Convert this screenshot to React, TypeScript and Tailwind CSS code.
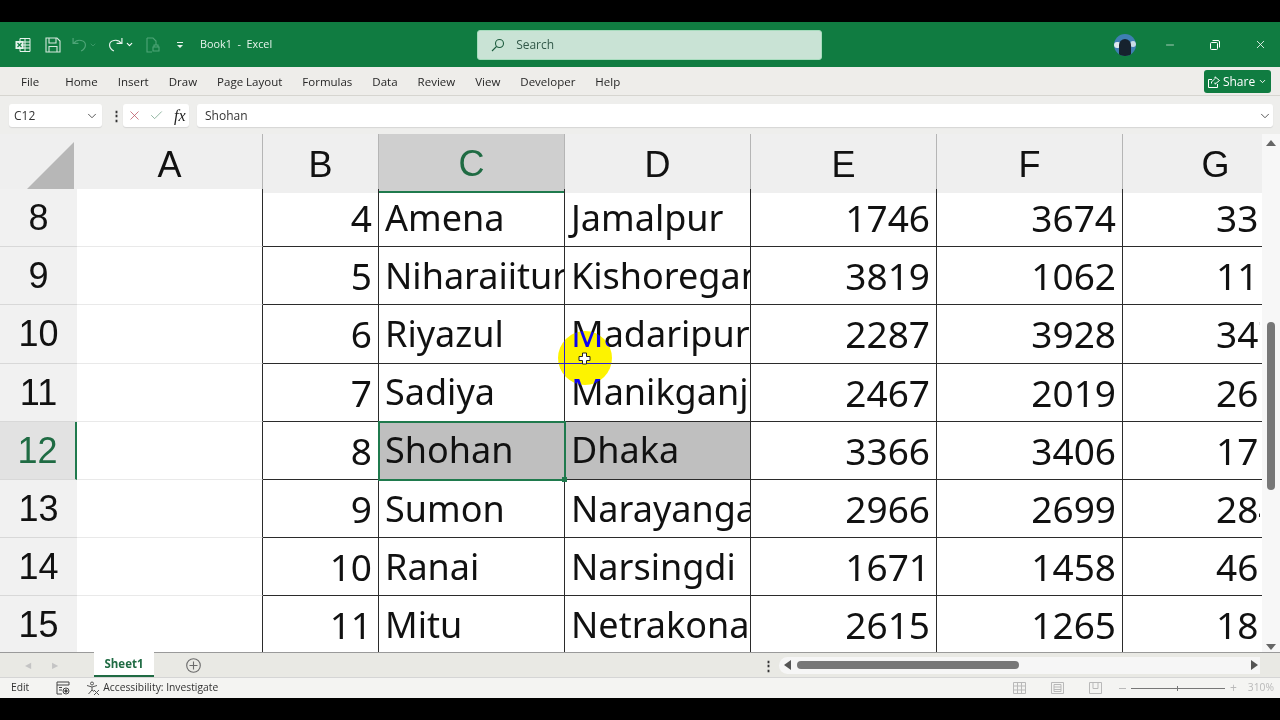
import { ChevronDown, Check, X, Minus } from "lucide-react"

const ui = "font-['Open_Sans',sans-serif]"

const tabs = ["Home", "Insert", "Draw", "Page Layout", "Formulas", "Data", "Review", "View", "Developer", "Help"]

const rows = [
  { n: "8", b: "4", c: "Amena", d: "Jamalpur", e: "1746", f: "3674", g: "3368" },
  { n: "9", b: "5", c: "Niharaiitur", d: "Kishoreganj", e: "3819", f: "1062", g: "1197" },
  { n: "10", b: "6", c: "Riyazul", d: "Madaripur", e: "2287", f: "3928", g: "3471" },
  { n: "11", b: "7", c: "Sadiya", d: "Manikganj", e: "2467", f: "2019", g: "2691" },
  { n: "12", b: "8", c: "Shohan", d: "Dhaka", e: "3366", f: "3406", g: "1760" },
  { n: "13", b: "9", c: "Sumon", d: "Narayanganj", e: "2966", f: "2699", g: "2845" },
  { n: "14", b: "10", c: "Ranai", d: "Narsingdi", e: "1671", f: "1458", g: "4682" },
  { n: "15", b: "11", c: "Mitu", d: "Netrakona", e: "2615", f: "1265", g: "1823" },
]

const columns = ["A", "B", "C", "D", "E", "F", "G"]
const gridCols = "grid-cols-[77px_186px_116px_186px_186px_186px_186px_186px]"
const cellText = "font-['Noto_Sans',sans-serif] text-[36px] leading-none text-[#111]"
const numText = "font-['Noto_Sans',sans-serif] text-[37px] leading-none text-[#111]"

function Row({ row }: { row: (typeof rows)[number] }) {
  const active = row.n === "12"
  const cell = "flex h-full items-center overflow-hidden whitespace-nowrap border-b border-r border-[#2b2b2b] "
  return (
    <div className={"grid h-[58.2px] " + gridCols}>
      <div className={"flex items-center justify-center border-b border-[#d8d8d8] pt-[1px] font-['Liberation_Sans',sans-serif] text-[36px] " + (active ? "border-r-2 border-r-[#1f7a4d] bg-[#e2e2e2] text-[#1f6b43]" : "bg-[#f1f1f1] text-[#111]")}>
        {row.n}
      </div>
      <div className="h-full border-b border-r border-b-[#e9e9e9] border-r-[#2b2b2b] bg-white" />
      <div className={cell + numText + " justify-end pr-[6px]"}>{row.b}</div>
      <div className={cell + cellText + " pl-[6px] " + (active ? "relative overflow-visible! bg-[#bfbfbf] outline-2 -outline-offset-1 outline-[#1f7a4d]" : "")}>
        {row.c}
        {active && <span className="absolute bottom-[-3px] right-[-3px] h-[5px] w-[5px] bg-[#1f7a4d]" />}
      </div>
      <div className={cell + cellText + " pl-[6px] " + (active ? "bg-[#bfbfbf]" : "")}>{row.d}</div>
      <div className={cell + numText + " justify-end pr-[6px]"}>{row.e}</div>
      <div className={cell + numText + " justify-end pr-[6px]"}>{row.f}</div>
      <div className={"flex h-full items-center border-b border-[#2b2b2b] pl-[93px] " + numText}>
        <span className="block w-[44px] overflow-hidden whitespace-nowrap">{row.g}</span>
      </div>
    </div>
  )
}

export default function App() {
  return (
    <div className={"relative flex h-[720px] w-[1280px] flex-col overflow-hidden bg-black " + ui}>
      <div className="h-[22px] shrink-0 bg-black" />

      {/* title bar */}
      <div className="flex h-[45px] shrink-0 items-center bg-[#107c41] text-white">
        <svg className="ml-[15px] h-[16px] w-[16px]" viewBox="0 0 16 16" fill="none" stroke="#e6f3ec" strokeWidth="1">
          <path d="M5 1.5h10v13H5zM5 5h10M5 8h10M5 11h10M10 1.5v13" />
          <rect x="0.5" y="4" width="8" height="8" fill="#e6f3ec" stroke="none" />
          <path d="M2.5 6l4 4M6.5 6l-4 4" stroke="#107c41" strokeWidth="1.2" />
        </svg>
        <svg className="ml-[14px] h-[16px] w-[16px]" viewBox="0 0 16 16" fill="none" stroke="#d5e8dd" strokeWidth="1.1">
          <path d="M1 1h11l3 3v11H1zM4 1v5h7V1M4 15V9.500h8V15" />
        </svg>
        <svg className="ml-[11px] h-[15px] w-[15px]" viewBox="0 0 14 14" fill="none" stroke="#4fa578" strokeWidth="1.1">
          <path d="M1 1v5h5M1.500 6C5 1 13 3 12.500 8c-.3 2.500-2 4-4 5" />
        </svg>
        <ChevronDown className="ml-[2px] h-[8px] w-[8px] text-[#4fa578]" strokeWidth={2} />
        <svg className="ml-[11px] h-[15px] w-[15px]" viewBox="0 0 14 14" fill="none" stroke="#e6f3ec" strokeWidth="1.1">
          <path d="M13 1v5H8M12.500 6C9 1 1 3 1.500 8c.3 2.500 2 4 4 5" />
        </svg>
        <ChevronDown className="ml-[2px] h-[9px] w-[9px]" strokeWidth={3} />
        <svg className="ml-[11px] h-[16px] w-[16px]" viewBox="0 0 16 16" fill="none" stroke="#4fa578" strokeWidth="1.1">
          <path d="M2 1h6l3 3v4M2 1v14h5M8 10h6v4H8zM9 10V8h4v2" />
        </svg>
        <svg className="ml-[15px] h-[8px] w-[8px]" viewBox="0 0 8 8" fill="#e6f3ec">
          <path d="M1 1h6v1H1zM1 4h6L4 7z" />
        </svg>
        <span className="ml-[16px] text-[10.800px] text-[#e6f3ec]">Book1&nbsp; -&nbsp; Excel</span>

        <div className="ml-[205px] flex h-[30px] w-[345px] items-center rounded-[3px] border border-[#a6dcbd] bg-[#c9e3d5] pl-[13px] text-[12px] text-[#33594a]">
          <svg className="h-[14px] w-[14px]" viewBox="0 0 14 14" fill="none" stroke="#1d5c3e" strokeWidth="1.1">
            <circle cx="8.500" cy="5.500" r="4" />
            <path d="M5.500 8.500L1 13" />
          </svg>
          <span className="ml-[11px]">Search</span>
        </div>

        <div className="relative ml-[292px] flex h-[22px] w-[22px] items-center justify-center overflow-hidden rounded-full bg-[#3f7fb3]">
          <span className="absolute left-0 top-[8px] h-[6px] w-[7px] rounded-full bg-[#dfe9ef]" />
          <span className="absolute right-0 top-[7px] h-[6px] w-[6px] rounded-full bg-[#c9dbe6]" />
          <div className="relative mt-[6px] h-[18px] w-[12px] rounded-t-full bg-[#16222e]" />
        </div>
        <Minus className="ml-[28px] h-[12px] w-[12px] text-[#d5e8dd]" strokeWidth={1.5} />
        <svg className="ml-[34px] h-[10px] w-[10px]" viewBox="0 0 10 10" fill="none" stroke="#fff" strokeWidth="1">
          <rect x="0.500" y="2.500" width="7" height="7" rx="1" />
          <path d="M2.500 .5H8a1.500 1.500 0 0 1 1.500 1.500v5.500" />
        </svg>
        <X className="ml-[34px] h-[13px] w-[13px]" strokeWidth={1.5} />
      </div>

      {/* ribbon tabs */}
      <div className="flex h-[29px] shrink-0 items-center gap-[20px] border-b border-[#d6d5d0] bg-[#eeedea] pl-[21px] pt-[1px] text-[11.500px] text-[#262626]">
        <span className="mr-[6px]">File</span>
        {tabs.map((t) => (
          <span key={t} className="whitespace-nowrap">
            {t}
          </span>
        ))}
        <div className="ml-auto mr-[9px] flex h-[23px] w-[67px] items-center justify-center gap-[3px] rounded-[3px] bg-[#107c41] text-[12px] text-white">
          <svg className="h-[12px] w-[12px]" viewBox="0 0 12 12" fill="none" stroke="#fff" strokeWidth="1">
            <path d="M4 3.500H.5v8h9V8M3.500 7.500V6l3.500-3.500V.8l4.500 3.700-4.500 3.700V6.500" />
          </svg>
          Share
          <ChevronDown className="h-[9px] w-[9px]" strokeWidth={2.5} />
        </div>
      </div>

      {/* formula bar */}
      <div className="flex h-[38px] shrink-0 items-center bg-[#eeeeec] pt-[1px] text-[12px] text-[#333]">
        <div className="ml-[9px] flex h-[23px] w-[93px] items-center justify-between rounded-[3px] bg-white pl-[5px] pr-[3px] shadow-[0_1px_1px_#d5d5d5]">
          <span>C12</span>
          <ChevronDown className="h-[14px] w-[14px] text-[#444]" strokeWidth={1.5} />
        </div>
        <span className="ml-[8px] w-[4px] text-center text-[13px] font-bold leading-none">⋮</span>
        <div className="ml-[9px] flex h-[23px] w-[66px] items-center rounded-[3px] bg-white pl-[4px] shadow-[0_1px_1px_#d5d5d5]">
          <X className="h-[15px] w-[15px] text-[#b8505e]" strokeWidth={1.2} />
          <Check className="ml-[7px] h-[15px] w-[15px] text-[#6f9f84]" strokeWidth={1.2} />
          <span className="ml-[10px] font-['Liberation_Serif',serif] text-[16px] italic text-[#222]">fx</span>
        </div>
        <div className="ml-[8px] flex h-[23px] w-[1076px] items-center justify-between rounded-[3px] bg-white pl-[8px] pr-[1px] shadow-[0_1px_1px_#d5d5d5]">
          <span>Shohan</span>
          <ChevronDown className="h-[14px] w-[14px] text-[#444]" strokeWidth={1.5} />
        </div>
      </div>

      {/* sheet */}
      <div className="flex h-[518px] shrink-0 bg-white">
        <div className="w-[1262px] overflow-hidden">
          <div className={"grid h-[55px] w-[1262px] border-b border-[#8a8a8a] pt-0 font-['Liberation_Sans',sans-serif] text-[36px] text-[#111] " + gridCols}>
            <div className="flex items-end justify-end bg-[#efefef] pb-[3px] pr-[3px]">
              <svg className="h-[48px] w-[48px]" viewBox="0 0 48 48" fill="#b7b7b7">
                <path d="M48 0v48H0z" />
              </svg>
            </div>
            {columns.map((c) => (
              <div key={c} className={"flex items-center justify-center border-r border-[#b5b5b5] pt-[3px] " + (c === "C" ? "border-b-2 border-b-[#1f7a4d] bg-[#cfcfcf] text-[#1f6b43]" : "bg-[#efefef]")}>
                {c}
              </div>
            ))}
          </div>
          {rows.map((r) => (
            <Row key={r.n} row={r} />
          ))}
        </div>
        <div className="flex w-[18px] flex-col items-center bg-[#f7f7f7] pt-[6px]">
          <div className="h-0 w-0 border-x-[5px] border-b-[6px] border-x-transparent border-b-[#666]" />
          <div className="mt-[176px] h-[168px] w-[8px] rounded-full bg-[#777]" />
          <div className="mt-auto mb-[2px] h-0 w-0 border-x-[5px] border-t-[6px] border-x-transparent border-t-[#666]" />
        </div>
      </div>

      {/* sheet tabs and horizontal scrollbar */}
      <div className="flex h-[25px] shrink-0 items-center border-t border-[#9a9a9a] bg-[#e9e9e4] text-[12px]">
        <span className="ml-[25px] text-[8px] text-[#c4c4c4]">◀</span>
        <span className="ml-[21px] text-[8px] text-[#c4c4c4]">▶</span>
        <div className="ml-[36px] flex h-[25px] w-[60px] -translate-y-[1px] items-center justify-center border-b-2 border-[#1f6b43] bg-white pt-[1px] text-[11.500px] font-bold text-[#1f6b43]">
          Sheet1
        </div>
        <svg className="ml-[32px] h-[15px] w-[15px]" viewBox="0 0 15 15" fill="none" stroke="#6b6b6b" strokeWidth="1.1">
          <circle cx="7.500" cy="7.500" r="6.800" />
          <path d="M7.500 3.500v8M3.500 7.500h8" />
        </svg>
        <span className="ml-[561px] w-[4px] text-center text-[13px] font-bold leading-none text-[#333]">⋮</span>
        <div className="ml-[13px] flex h-[17px] w-[481px] items-center rounded-l-full bg-[#f6f6f6] pl-[5px]">
          <div className="h-0 w-0 border-y-[5px] border-r-[7px] border-y-transparent border-r-[#555]" />
          <div className="ml-[6px] h-[8px] w-[222px] rounded-full bg-[#777]" />
          <div className="ml-auto mr-[2px] h-0 w-0 border-y-[5px] border-l-[7px] border-y-transparent border-l-[#555]" />
        </div>
      </div>

      {/* status bar */}
      <div className="flex h-[21px] shrink-0 items-center border-t border-[#d5d5d5] bg-[#f4f4f2] text-[10.300px] text-[#333]">
        <span className="ml-[11px]">Edit</span>
        <svg className="ml-[27px] h-[14px] w-[14px]" viewBox="0 0 14 14" fill="none" stroke="#444" strokeWidth="1">
          <path d="M1 1h12v3H1zM1 4v9h5M3 6.500h3M3 9h3" />
          <circle cx="10" cy="10" r="3" />
          <circle cx="10" cy="10" r="1.200" fill="#444" />
        </svg>
        <svg className="ml-[16px] h-[14px] w-[14px]" viewBox="0 0 14 14" fill="none" stroke="#555" strokeWidth="1">
          <circle cx="6" cy="2.500" r="1.500" />
          <path d="M1 4.500l5 1.500 5-1.500M6 6v3L2.500 13M6 9l2 1.500M8 9l5 5M13 9l-5 5" />
        </svg>
        <span className="ml-[3px]">Accessibility: Investigate</span>
        <div className="ml-auto flex items-center">
          <svg className="h-[12px] w-[13px]" viewBox="0 0 13 12" fill="none" stroke="#b9b9b9">
            <path d="M.5.5h12v11H.5zM.5 4h12M.5 8h12M4.500.5v11M8.500.5v11" />
          </svg>
          <svg className="ml-[25px] h-[12px] w-[13px]" viewBox="0 0 13 12" fill="none" stroke="#b9b9b9">
            <path d="M.5.5h12v11H.5zM3 2.500h7v7H3zM3 5h7M3 7.500h7" />
          </svg>
          <svg className="ml-[25px] h-[12px] w-[13px]" viewBox="0 0 13 12" fill="none" stroke="#b9b9b9">
            <path d="M.5.5h12v11H.5zM4 .5v6h5v-6" />
          </svg>
          <span className="ml-[17px] h-px w-[7px] bg-[#b9b9b9]" />
          <div className="relative ml-[5px] h-px w-[94px] bg-[#777]">
            <span className="absolute left-[46px] top-[-2px] h-[5px] w-px bg-[#777]" />
          </div>
          <span className="ml-[5px] text-[12px] leading-none text-[#b9b9b9]">+</span>
          <span className="ml-[11px] mr-[6px] text-[10.300px] text-[#b9b9b9]">310%</span>
        </div>
      </div>

      <div className="flex-1 bg-black" />

      {/* cursor highlight */}
      <div className="pointer-events-none absolute left-[558px] top-[331px] h-[54px] w-[54px] rounded-full bg-[#020cff] mix-blend-difference" />
      <svg className="pointer-events-none absolute left-[578px] top-[352px] h-[13px] w-[13px]" viewBox="0 0 13 13" fill="#fff" stroke="#222" strokeWidth="1">
        <path d="M4.500 1h4v3.500H12v4H8.500V12h-4V8.500H1v-4h3.500z" />
      </svg>
    </div>
  )
}
